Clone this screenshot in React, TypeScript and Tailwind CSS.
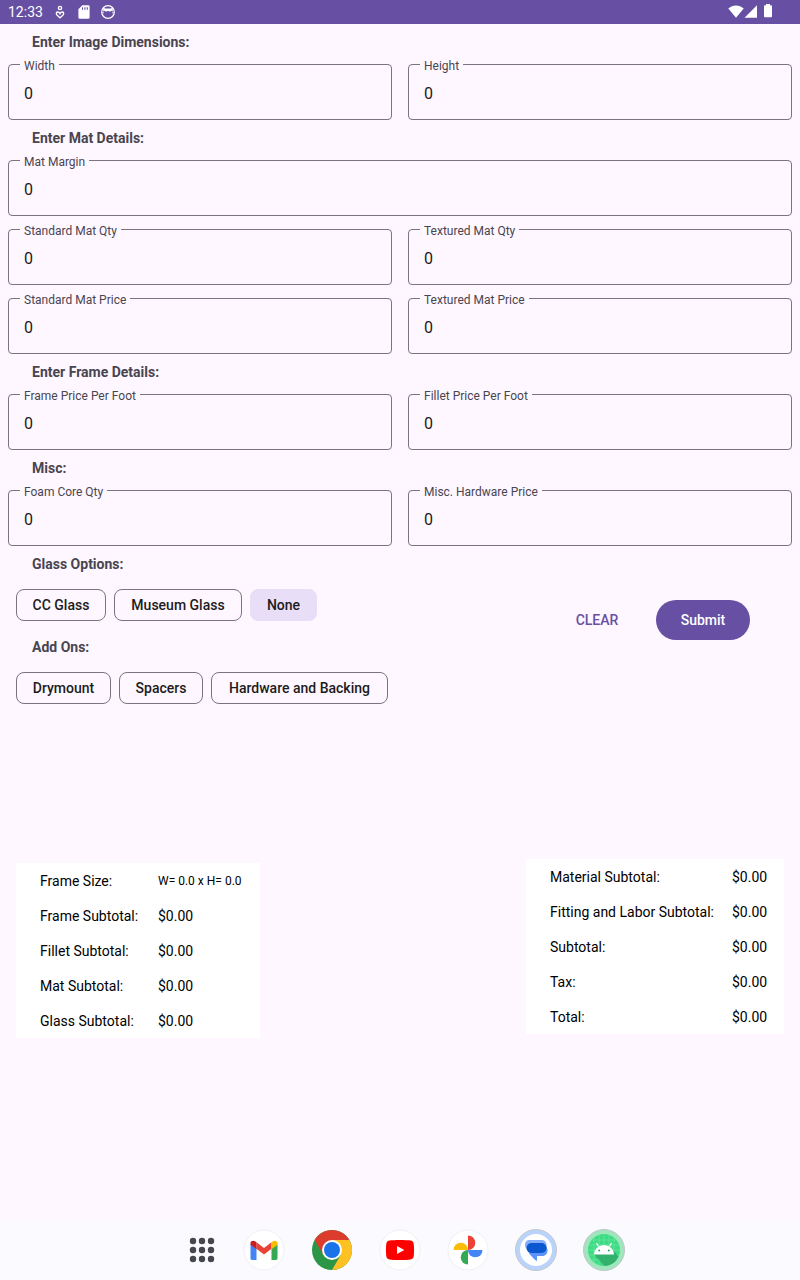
import React, { useState } from "react";

type FieldSpec = { id: string; label: string };

function Field({ id, label }: FieldSpec) {
  return (
    <fieldset className="min-w-0 rounded border border-[#79747e] pl-[11px]">
      <legend className="px-1 pt-[3px] text-xs leading-3 text-[#49454f]">
        <label htmlFor={id} className="block">
          {label}
        </label>
      </legend>
      <input
        id={id}
        type="text"
        inputMode="decimal"
        defaultValue="0"
        className="mb-[5px] block h-[42px] w-full bg-transparent px-1 text-base leading-6 text-[#1d1b20] outline-none"
      />
    </fieldset>
  );
}

function FieldRow({ fields }: { fields: FieldSpec[] }) {
  return (
    <div className="grid auto-cols-fr grid-flow-col gap-4 px-2">
      {fields.map((f) => (
        <Field key={f.id} id={f.id} label={f.label} />
      ))}
    </div>
  );
}

function Heading({ children }: { children: React.ReactNode }) {
  return (
    <h2 className="px-8 pt-2 pb-[5px] text-sm leading-5 font-bold text-[#49454f]">{children}</h2>
  );
}

type ChipProps = { label: string; width: string; selected: boolean; onClick: () => void };

function Chip({ label, width, selected, onClick }: ChipProps) {
  return (
    <button
      type="button"
      aria-pressed={selected}
      onClick={onClick}
      className={`h-8 rounded-lg border px-[15px] text-sm font-medium whitespace-nowrap text-[#1d1b20] ${width} ${
        selected ? "border-[#e8def8] bg-[#e8def8]" : "border-[#79747e]"
      }`}
    >
      {label}
    </button>
  );
}

const glassChoices = [
  { label: "CC Glass", width: "min-w-[90px]" },
  { label: "Museum Glass", width: "min-w-32" },
  { label: "None", width: "min-w-[67px]" },
];

const addOnChoices = [
  { label: "Drymount", width: "min-w-[95px]" },
  { label: "Spacers", width: "min-w-[84px]" },
  { label: "Hardware and Backing", width: "min-w-[177px]" },
];

function Summary({ label, rows, columns }: { label: string; rows: string[][]; columns: string[] }) {
  return (
    <table aria-label={label} className="bg-white text-sm text-black">
      <tbody>
        {rows.map(([name, value]) => (
          <tr key={name} className="h-[35px]">
            <th scope="row" className={`pl-6 text-left font-normal whitespace-nowrap ${columns[0]}`}>
              {name}
            </th>
            <td className={`whitespace-nowrap ${columns[1]} ${value.startsWith("W") ? "text-xs" : ""}`}>
              {value}
            </td>
          </tr>
        ))}
      </tbody>
    </table>
  );
}

function StatusBar() {
  return (
    <header className="flex h-6 items-center justify-between bg-[#6750a4] pr-7 pl-2 text-white">
      <div className="flex items-center">
        <time className="w-[44px] text-sm">12:33</time>
        <svg className="size-4" viewBox="0 0 16 16" fill="none" stroke="currentColor" strokeWidth="1.4">
          <circle cx="8" cy="4" r="1.6" />
          <path d="M8 9.700C6.800 7.300 4.300 7.600 4.300 9.500c0 1.700 1.900 2.700 3.700 4.300 1.800-1.600 3.700-2.600 3.700-4.300 0-1.900-2.500-2.200-3.700.2Z" />
        </svg>
        <svg className="ml-2 size-4" viewBox="0 0 16 16" fill="currentColor">
          <path d="M6.300 1.300h6a1.300 1.300 0 0 1 1.300 1.300v10.800a1.300 1.300 0 0 1-1.300 1.300H3.700a1.300 1.300 0 0 1-1.300-1.300V5.200Z" />
          <path d="M6.500 3.200v2.600M8.900 3.200v2.600M11.300 3.200v2.600" stroke="#6750a4" strokeWidth="1.100" />
        </svg>
        <svg className="ml-2 size-4" viewBox="0 0 16 16">
          <circle cx="8" cy="8" r="6.300" fill="none" stroke="currentColor" strokeWidth="1.200" />
          <path d="M3.200 7.600V3.600l2 .8h5.600l2-.8v4l-1.300-.9-1.300.9H9.300L8 6.800l-1.300.8H5.800l-1.300-.9Z" fill="currentColor" />
          <path d="M3 8v1.500M13 8v1.500" stroke="currentColor" />
        </svg>
      </div>
      <div className="flex items-center">
        <svg className="h-4 w-4" viewBox="0 0 16 16" fill="currentColor">
          <path d="M.3 4.600C4.900.4 11.100.4 15.700 4.600L8 13.800Z" />
        </svg>
        <svg className="h-4 w-4" viewBox="0 0 16 16" fill="currentColor">
          <path d="M13 1.300V13.800H.5Z" />
        </svg>
        <svg className="h-4 w-3" viewBox="0 0 12 16" fill="currentColor">
          <path d="M6 0h4v1.300h1a1 1 0 0 1 1 1v9.900a1 1 0 0 1-1 1H5a1 1 0 0 1-1-1V2.300a1 1 0 0 1 1-1h1Z" />
        </svg>
      </div>
    </header>
  );
}

function AppsIcon() {
  return (
    <svg className="size-11" viewBox="0 0 44 44" fill="#46464f">
      {[13, 22, 31].map((y) => [13, 22, 31].map((x) => <circle key={`${x}-${y}`} cx={x} cy={y} r="3.200" />))}
    </svg>
  );
}

function Disc() {
  return <circle cx="22" cy="22" r="20" fill="#fff" stroke="#f0eff5" strokeWidth="1" />;
}

function GmailIcon() {
  return (
    <svg className="size-11" viewBox="0 0 44 44">
      <Disc />
      <path d="M8.500 16v14.300c0 .9.700 1.600 1.600 1.600h4.400V20.500Z" fill="#4285f4" />
      <path d="M35.500 16v14.300c0 .9-.7 1.600-1.600 1.600h-4.400V20.500Z" fill="#34a853" />
      <path d="M14.500 14.200 22 19.900l7.500-5.700v6.500L22 26.400l-7.500-5.700Z" fill="#ea4335" />
      <path d="M8.500 14.700v2l6 4.500v-7l-1.100-.8c-2-1.500-4.900-.4-4.900 1.300Z" fill="#c5221f" />
      <path d="M35.500 14.700v2l-6 4.500v-7l1.100-.8c2-1.500 4.900-.4 4.900 1.300Z" fill="#fbbc04" />
    </svg>
  );
}

function ChromeIcon() {
  return (
    <svg className="size-11" viewBox="0 0 44 44">
      <circle cx="22" cy="22" r="20" fill="#2b9746" />
      <path d="M22 12h17.320A20 20 0 0 1 22 42L30.660 27Z" fill="#fdc221" />
      <path d="M22 22 13.340 27 4.680 12A20 20 0 0 1 39.320 12H22Z" fill="#db3c2e" />
      <circle cx="22" cy="22" r="10" fill="#fff" />
      <circle cx="22" cy="22" r="8" fill="#1a73e8" />
    </svg>
  );
}

function YouTubeIcon() {
  return (
    <svg className="size-11" viewBox="0 0 44 44">
      <Disc />
      <path d="M11.500 12.600c4-.7 17-.7 21 0 2 .3 2.900 1.200 3.200 3.200.5 3.500.5 8.900 0 12.400-.3 2-1.200 2.900-3.200 3.200-4 .7-17 .7-21 0-2-.3-2.900-1.200-3.200-3.200-.5-3.500-.5-8.900 0-12.400.3-2 1.200-2.900 3.200-3.200Z" fill="#f00" />
      <path d="m19 18 7.300 4-7.300 4Z" fill="#fff" />
    </svg>
  );
}

function PhotosIcon() {
  return (
    <svg className="size-11" viewBox="0 0 44 44">
      <Disc />
      <path d="M22 7.500a7.250 7.250 0 0 1 0 14.500Z" fill="#ea4335" />
      <path d="M36.500 22a7.250 7.250 0 0 1-14.500 0Z" fill="#4285f4" />
      <path d="M22 36.500a7.250 7.250 0 0 1 0-14.500Z" fill="#34a853" />
      <path d="M7.500 22a7.250 7.250 0 0 1 14.500 0Z" fill="#fbbc04" />
    </svg>
  );
}

function MessagesIcon() {
  return (
    <svg className="size-11" viewBox="0 0 44 44">
      <circle cx="22" cy="22" r="20.500" fill="#b9d3fb" stroke="#c6c8d0" />
      <circle cx="22" cy="22" r="16" fill="#fff" />
      <path d="M16 12h11c3.500 0 5.500 2 5.500 5v5H17c-4 0-6-2-6-5s1.500-5 5-5Z" fill="#82adfb" />
      <path d="M20 17h8.500c3.300 0 5 2.500 5 5.500s-2 5.500-5 5.500H23v5c-1.200-.3-2.700-1.800-4.500-3.800C15.500 26.500 14.500 25 14 22Z" fill="#5b93fb" />
      <path d="M17.500 15h10a5 5 0 0 1 0 10h-10a5 5 0 0 1 0-10Z" fill="#0b57d0" />
    </svg>
  );
}

function AndroidIcon() {
  return (
    <svg className="size-11" viewBox="0 0 44 44">
      <circle cx="22" cy="22" r="20.500" fill="#a0e6bd" stroke="#c0c6c8" />
      <circle cx="22" cy="22" r="16" fill="#3ddc84" />
      <path d="M12 9.500v25M17 7v30M22 6v32M27 7v30M32 9.500v25M9.500 12h25M7 17h30M6 22h32M7 27h30M9.500 32h25" stroke="#73e7a8" strokeWidth=".6" />
      <path d="M12 26.500 22.500 38A16 16 0 0 0 36.500 28.500L30 21Z" fill="#2da565" opacity=".8" />
      <path d="M12 26.500a10 9.500 0 0 1 20 0Z" fill="#fff" />
      <path d="m16.500 18.500-2-3.500M27.500 18.500l2-3.500" stroke="#fff" strokeWidth="1.200" />
      <circle cx="17.200" cy="22.500" r="1" fill="#2da565" />
      <circle cx="26.800" cy="22.500" r="1" fill="#2da565" />
    </svg>
  );
}

const dockApps = [
  { name: "All apps", Icon: AppsIcon },
  { name: "Gmail", Icon: GmailIcon },
  { name: "Chrome", Icon: ChromeIcon },
  { name: "YouTube", Icon: YouTubeIcon },
  { name: "Photos", Icon: PhotosIcon },
  { name: "Messages", Icon: MessagesIcon },
  { name: "Android", Icon: AndroidIcon },
];

export default function App() {
  const [glass, setGlass] = useState("None");
  const [addOns, setAddOns] = useState<string[]>([]);

  const toggleAddOn = (label: string) =>
    setAddOns((current) =>
      current.includes(label) ? current.filter((item) => item !== label) : [...current, label],
    );

  return (
    <div className="flex min-h-screen flex-col bg-[#fef7ff] font-[Roboto,sans-serif]">
      <StatusBar />
      <main className="grow">
        <form onSubmit={(e) => e.preventDefault()}>
          <Heading>Enter Image Dimensions:</Heading>
          <FieldRow fields={[{ id: "width", label: "Width" }, { id: "height", label: "Height" }]} />

          <Heading>Enter Mat Details:</Heading>
          <div className="flex flex-col gap-1.5">
            <FieldRow fields={[{ id: "mat-margin", label: "Mat Margin" }]} />
            <FieldRow
              fields={[
                { id: "standard-qty", label: "Standard Mat Qty" },
                { id: "textured-qty", label: "Textured Mat Qty" },
              ]}
            />
            <FieldRow
              fields={[
                { id: "standard-price", label: "Standard Mat Price" },
                { id: "textured-price", label: "Textured Mat Price" },
              ]}
            />
          </div>

          <Heading>Enter Frame Details:</Heading>
          <FieldRow
            fields={[
              { id: "frame-price", label: "Frame Price Per Foot" },
              { id: "fillet-price", label: "Fillet Price Per Foot" },
            ]}
          />

          <Heading>Misc:</Heading>
          <FieldRow
            fields={[
              { id: "foam-qty", label: "Foam Core Qty" },
              { id: "hardware-price", label: "Misc. Hardware Price" },
            ]}
          />

          <div className="flex items-center justify-between pr-[50px]">
            <div>
              <Heading>Glass Options:</Heading>
              <div className="flex gap-2 px-4 pt-2.5 pb-2">
                {glassChoices.map(({ label, width }) => (
                  <Chip key={label} label={label} width={width} selected={glass === label} onClick={() => setGlass(label)} />
                ))}
              </div>
              <Heading>Add Ons:</Heading>
              <div className="flex gap-2 px-4 pt-2.5">
                {addOnChoices.map(({ label, width }) => (
                  <Chip
                    key={label}
                    label={label}
                    width={width}
                    selected={addOns.includes(label)}
                    onClick={() => toggleAddOn(label)}
                  />
                ))}
              </div>
            </div>
            <div className="mb-2.5 flex gap-[22px] text-sm font-medium">
              <button type="reset" className="h-10 min-w-[74px] px-3 text-[#6750a4]">
                CLEAR
              </button>
              <button type="submit" className="h-10 min-w-[94px] rounded-full bg-[#6750a4] px-6 text-white">
                Submit
              </button>
            </div>
          </div>
        </form>

        <section className="mt-[155px] flex items-start justify-between px-4">
          <div className="pt-1">
            <Summary
              label="Frame costs"
              columns={["w-[142px]", "pr-4 min-w-[102px]"]}
              rows={[
                ["Frame Size:", "W= 0.0 x H= 0.0"],
                ["Frame Subtotal:", "$0.00"],
                ["Fillet Subtotal:", "$0.00"],
                ["Mat Subtotal:", "$0.00"],
                ["Glass Subtotal:", "$0.00"],
              ]}
            />
          </div>
          <Summary
            label="Order totals"
            columns={["min-w-[206px]", "pr-4 min-w-[52px]"]}
            rows={[
              ["Material Subtotal:", "$0.00"],
              ["Fitting and Labor Subtotal:", "$0.00"],
              ["Subtotal:", "$0.00"],
              ["Tax:", "$0.00"],
              ["Total:", "$0.00"],
            ]}
          />
        </section>
      </main>

      <nav aria-label="Taskbar" className="flex h-[60px] items-center justify-center gap-6 bg-[#fafaff] pl-1.5">
        {dockApps.map(({ name, Icon }, index) => (
          <button key={name} type="button" aria-label={name} className={index === 0 ? "-mr-1.5" : ""}>
            <Icon />
          </button>
        ))}
      </nav>
    </div>
  );
}
